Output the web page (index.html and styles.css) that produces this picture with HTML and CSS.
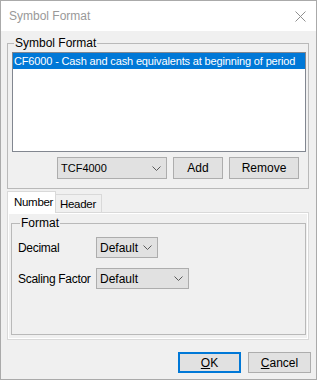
FILE: index.html
```html
<!DOCTYPE html>
<html lang="en">
<head>
    <meta charset="UTF-8">
    <title>Symbol Format</title>
    <link rel="stylesheet" href="styles.css">
</head>
<body>
    <div class="window">
        <div class="titlebar">
            <span class="title">Symbol Format</span>
            <svg class="close" width="11" height="11" viewBox="0 0 11 11">
                <path d="M0.5 0.5 L10.5 10.5 M10.5 0.5 L0.5 10.5" stroke="#8f8f8f" stroke-width="1" fill="none"/>
            </svg>
        </div>
        <div class="content">
            <fieldset class="group symbols">
                <legend>Symbol Format</legend>
                <div class="listbox">
                    <div class="list-item selected">CF6000 - Cash and cash equivalents at beginning of period</div>
                </div>
                <div class="picker-row">
                    <div class="combo combo-symbol">
                        <span>TCF4000</span>
                        <svg width="9" height="5" viewBox="0 0 9 5"><path d="M0.5 0.5 L4.5 4.5 L8.5 0.5" stroke="#5a5a5a" fill="none"/></svg>
                    </div>
                    <button class="btn btn-add">Add</button>
                    <button class="btn btn-remove">Remove</button>
                </div>
            </fieldset>

            <div class="tab-strip">
                <div class="tab active">Number</div>
                <div class="tab">Header</div>
            </div>
            <div class="tab-panel">
                <div class="tab-page">
                    <fieldset class="group format">
                        <legend>Format</legend>
                        <div class="field">
                            <label>Decimal</label>
                            <div class="combo combo-decimal">
                                <span>Default</span>
                                <svg width="9" height="5" viewBox="0 0 9 5"><path d="M0.5 0.5 L4.5 4.5 L8.5 0.5" stroke="#5a5a5a" fill="none"/></svg>
                            </div>
                        </div>
                        <div class="field">
                            <label>Scaling Factor</label>
                            <div class="combo combo-scaling">
                                <span>Default</span>
                                <svg width="9" height="5" viewBox="0 0 9 5"><path d="M0.5 0.5 L4.5 4.5 L8.5 0.5" stroke="#5a5a5a" fill="none"/></svg>
                            </div>
                        </div>
                    </fieldset>
                </div>
            </div>

            <div class="footer">
                <button class="btn btn-dialog default"><u>O</u>K</button>
                <button class="btn btn-dialog"><u>C</u>ancel</button>
            </div>
        </div>
    </div>
</body>
</html>
```

FILE: styles.css
```css
* {
    box-sizing: border-box;
}
body {
    margin: 0;
    font-family: "Liberation Sans", Arial, sans-serif;
    font-size: 11px;
    color: #000000;
    background-color: #ffffff;
}
.window {
    width: 317px;
    height: 380px;
    border: 1px solid #aaaaaa;
    background-color: #f0f0f0;
    display: flex;
    flex-direction: column;
}
.titlebar {
    height: 30px;
    background-color: #ffffff;
    display: flex;
    align-items: center;
    justify-content: space-between;
    padding: 0 10px 0 8px;
}
.title {
    font-size: 12px;
    color: #999999;
}
.close {
    display: block;
}
.content {
    flex: 1;
    display: flex;
    flex-direction: column;
    padding: 5px 7px 0 6px;
}
.group {
    margin: 0;
    min-width: 0;
    border: 1px solid #b9b9b9;
}
.group legend {
    font-size: 12px;
    line-height: 15px;
    padding: 0 1px;
    margin-left: 2px;
}
.symbols {
    padding: 1px 2px 9px 4px;
}
.listbox {
    height: 100px;
    border: 1px solid #828790;
    background-color: #ffffff;
}
.list-item {
    height: 16px;
    line-height: 16px;
    padding-left: 1px;
    white-space: nowrap;
    overflow: hidden;
    font-size: 11px;
    letter-spacing: -0.15px;
}
.list-item.selected {
    background-color: #0078d7;
    color: #ffffff;
}
.picker-row {
    display: flex;
    justify-content: flex-end;
    gap: 6px;
    margin-top: 5px;
    padding-right: 7px;
}
.combo {
    display: flex;
    align-items: center;
    justify-content: space-between;
    height: 21px;
    border: 1px solid #adadad;
    background-color: #e1e1e1;
    padding: 0 5px 0 3px;
}
.combo svg {
    display: block;
}
.combo-symbol {
    width: 110px;
    height: 22px;
}
.combo-decimal {
    width: 62px;
}
.combo-scaling {
    width: 93px;
}
.btn {
    font-family: inherit;
    font-size: 12px;
    color: #000000;
    height: 22px;
    padding: 0;
    border: 1px solid #adadad;
    background-color: #e1e1e1;
}
.btn-add {
    width: 50px;
}
.btn-remove {
    width: 70px;
}
.tab-strip {
    display: flex;
    align-items: flex-end;
    height: 22px;
    margin-top: 2px;
    margin-bottom: -1px;
    position: relative;
    z-index: 1;
}
.tab {
    height: 19px;
    line-height: 18px;
    padding: 0 5px 0 4px;
    font-size: 11.5px;
    letter-spacing: -0.3px;
    border: 1px solid #d9d9d9;
    border-left: none;
    background-color: #f0f0f0;
}
.tab.active {
    width: 49px;
    height: 22px;
    line-height: 20px;
    padding-left: 6px;
    border-left: 1px solid #d9d9d9;
    border-bottom: none;
    background-color: #ffffff;
}
.tab-panel {
    height: 128px;
    border: 1px solid #d9d9d9;
    background-color: #ffffff;
    padding: 1px;
}
.tab-page {
    height: 100%;
    background-color: #f0f0f0;
    padding: 2px 1px 3px 2px;
}
.format {
    height: 119px;
    padding: 6px 2px 0 6px;
}
.field {
    display: flex;
    align-items: center;
    margin-bottom: 10px;
}
.field label {
    width: 78px;
    font-size: 12px;
    letter-spacing: -0.3px;
}
.field .combo {
    font-size: 12px;
}
.footer {
    display: flex;
    justify-content: flex-end;
    gap: 7px;
    margin-top: 12px;
    margin-right: -2px;
}
.btn-dialog {
    width: 63px;
    height: 21px;
}
.btn-dialog.default {
    border-color: #0078d7;
    box-shadow: inset 0 0 0 1px #0078d7;
}
```
